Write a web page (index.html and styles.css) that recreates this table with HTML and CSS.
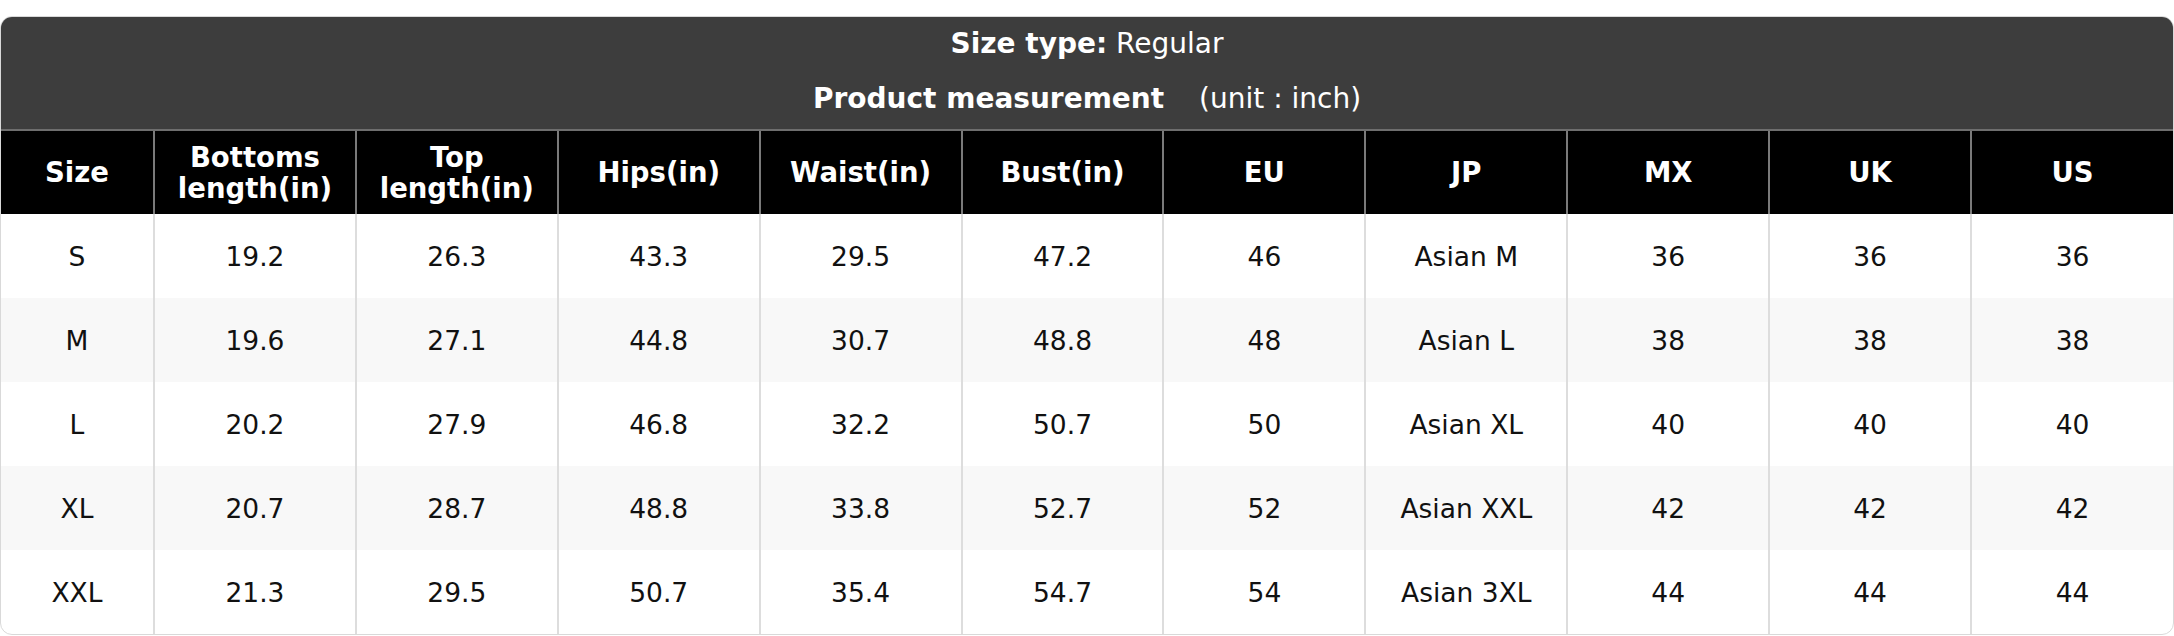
FILE: index.html
```html
<!DOCTYPE html>
<html lang="en">
<head>
<meta charset="utf-8">
<title>Size chart</title>
<link rel="stylesheet" href="styles.css">
</head>
<body>
<div class="page">
  <div class="chart">
    <div class="chart-head">
      <p><b>Size type:</b> Regular</p>
      <p><b>Product measurement</b> <span class="unit">(unit : inch)</span></p>
    </div>
    <table class="sizes">
      <colgroup>
        <col class="col-size">
        <col><col><col><col><col><col><col><col><col><col>
      </colgroup>
      <thead>
        <tr>
          <th>Size</th>
          <th>Bottoms length(in)</th>
          <th>Top length(in)</th>
          <th>Hips(in)</th>
          <th>Waist(in)</th>
          <th>Bust(in)</th>
          <th>EU</th>
          <th>JP</th>
          <th>MX</th>
          <th>UK</th>
          <th>US</th>
        </tr>
      </thead>
      <tbody>
        <tr><td>S</td><td>19.2</td><td>26.3</td><td>43.3</td><td>29.5</td><td>47.2</td><td>46</td><td>Asian M</td><td>36</td><td>36</td><td>36</td></tr>
        <tr><td>M</td><td>19.6</td><td>27.1</td><td>44.8</td><td>30.7</td><td>48.8</td><td>48</td><td>Asian L</td><td>38</td><td>38</td><td>38</td></tr>
        <tr><td>L</td><td>20.2</td><td>27.9</td><td>46.8</td><td>32.2</td><td>50.7</td><td>50</td><td>Asian XL</td><td>40</td><td>40</td><td>40</td></tr>
        <tr><td>XL</td><td>20.7</td><td>28.7</td><td>48.8</td><td>33.8</td><td>52.7</td><td>52</td><td>Asian XXL</td><td>42</td><td>42</td><td>42</td></tr>
        <tr><td>XXL</td><td>21.3</td><td>29.5</td><td>50.7</td><td>35.4</td><td>54.7</td><td>54</td><td>Asian 3XL</td><td>44</td><td>44</td><td>44</td></tr>
      </tbody>
    </table>
  </div>
</div>
</body>
</html>
```
FILE: styles.css
```css
html, body {
  margin: 0;
  padding: 0;
  background: #ffffff;
}

body {
  font-family: "DejaVu Sans", "Noto Sans", sans-serif;
  color: #111111;
}

.page {
  padding-top: 16px;
}

.chart {
  border: 1px solid #d9d9d9;
  border-radius: 12px;
  overflow: hidden;
  background: #ffffff;
}

.chart-head {
  background: #3d3d3d;
  color: #ffffff;
  text-align: center;
  font-size: 28px;
  padding: 8px 0 11px;
}

.chart-head p {
  margin: 0;
  line-height: 38px;
}

.chart-head p + p {
  margin-top: 17px;
}

.chart-head .unit {
  margin-left: 26px;
}

.sizes {
  width: 100%;
  border-collapse: collapse;
  table-layout: fixed;
}

.col-size {
  width: 153px;
}

.sizes th {
  background: #000000;
  color: #ffffff;
  font-weight: bold;
  font-size: 27.5px;
  line-height: 31px;
  height: 83px;
  padding: 0 6px;
  text-align: center;
  vertical-align: middle;
  border-top: 2px solid #6e6e6e;
  border-left: 2px solid #7a7a7a;
}

.sizes td {
  height: 84px;
  padding: 0 6px;
  text-align: center;
  vertical-align: middle;
  font-size: 26.5px;
  color: #111111;
  border-left: 2px solid #dddddd;
}

.sizes th:first-child,
.sizes td:first-child {
  border-left: none;
}

.sizes tbody tr:nth-child(even) td {
  background: #f8f8f8;
}
```
